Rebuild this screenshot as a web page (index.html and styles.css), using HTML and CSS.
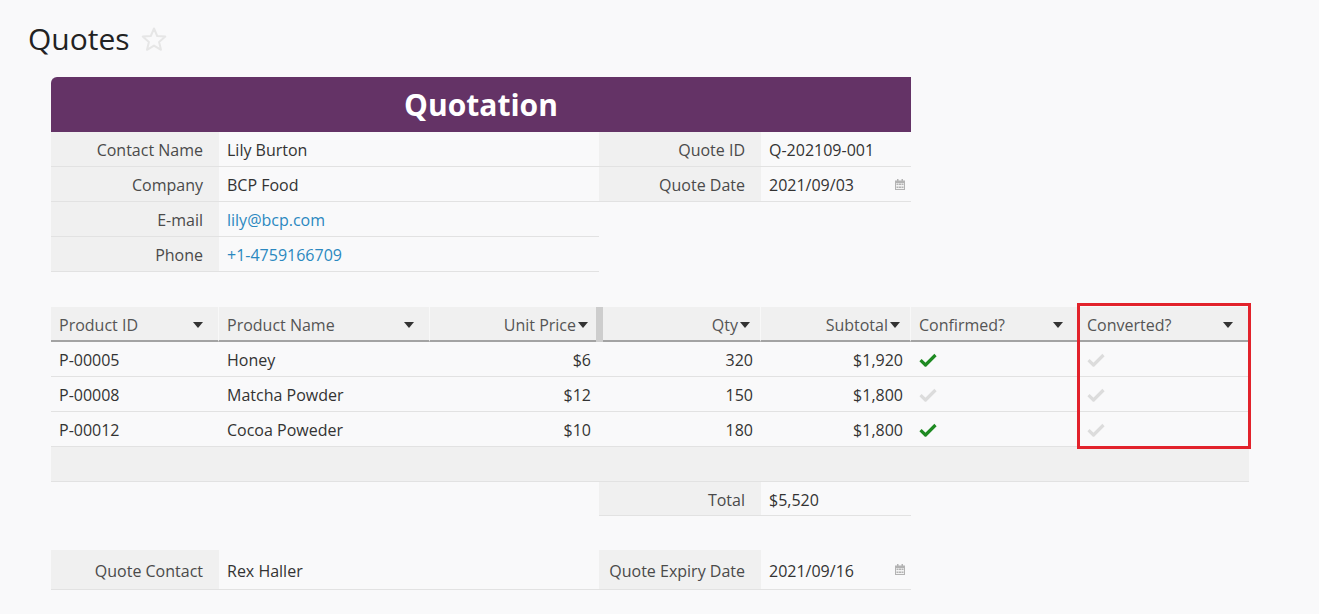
FILE: index.html
```html
<!DOCTYPE html>
<html lang="en">
<head>
  <meta charset="UTF-8" />
  <meta name="viewport" content="width=device-width, initial-scale=1.0"/>
  <title>Quotes</title>
  <link rel="stylesheet" href="styles.css">
</head>
<body>

  <div class="page-title">
    <h1>Quotes</h1>
    <svg class="star" width="28" height="27" viewBox="0 0 28 27">
      <path d="M14 2.5 L17.2 10 L25.3 10.6 L19.1 15.9 L21 23.8 L14 19.6 L7 23.8 L8.9 15.9 L2.7 10.6 L10.8 10 Z" fill="none" stroke="#e6e6e6" stroke-width="2" stroke-linejoin="round"/>
    </svg>
  </div>

  <div class="sheet">

    <div class="banner">Quotation</div>

    <div class="info-grid">
      <div class="cell label">Contact Name</div>
      <div class="cell value span-2">Lily Burton</div>
      <div class="cell label">Quote ID</div>
      <div class="cell value">Q-202109-001</div>

      <div class="cell label">Company</div>
      <div class="cell value span-2">BCP Food</div>
      <div class="cell label">Quote Date</div>
      <div class="cell value date">
        <span>2021/09/03</span>
        <svg class="calendar" width="10" height="11" viewBox="0 0 10 11">
          <rect x="0" y="1.5" width="10" height="9.5" fill="#b3b3b3"/>
          <rect x="2" y="0" width="1.5" height="2.5" fill="#b3b3b3"/>
          <rect x="6.5" y="0" width="1.5" height="2.5" fill="#b3b3b3"/>
          <rect x="1" y="4" width="8" height="6" fill="#f3f3f3"/>
          <rect x="1.5" y="4.5" width="2" height="1.5" fill="#b3b3b3"/>
          <rect x="4" y="4.5" width="2" height="1.5" fill="#b3b3b3"/>
          <rect x="6.5" y="4.5" width="2" height="1.5" fill="#b3b3b3"/>
          <rect x="1.5" y="7.5" width="2" height="1.5" fill="#b3b3b3"/>
          <rect x="4" y="7.5" width="2" height="1.5" fill="#b3b3b3"/>
          <rect x="6.5" y="7.5" width="2" height="1.5" fill="#b3b3b3"/>
        </svg>
      </div>

      <div class="cell label">E-mail</div>
      <div class="cell value span-2 link">lily@bcp.com</div>
      <div class="empty span-2"></div>

      <div class="cell label">Phone</div>
      <div class="cell value span-2 link">+1-4759166709</div>
      <div class="empty span-2"></div>
    </div>

    <div class="product-grid">
      <div class="cell head">Product ID <i class="caret"></i></div>
      <div class="cell head">Product Name <i class="caret"></i></div>
      <div class="cell head num frozen">Unit Price<i class="caret"></i></div>
      <div class="cell head num">Qty<i class="caret"></i></div>
      <div class="cell head num">Subtotal<i class="caret"></i></div>
      <div class="cell head">Confirmed? <i class="caret"></i></div>
      <div class="cell head">Converted? <i class="caret"></i></div>

      <div class="cell">P-00005</div>
      <div class="cell">Honey</div>
      <div class="cell num">$6</div>
      <div class="cell num">320</div>
      <div class="cell num">$1,920</div>
      <div class="cell"><svg class="check on" width="18" height="14" viewBox="0 0 18 14"><path d="M1.5 7.2 L6.5 12 L16.5 2" fill="none" stroke-width="3.2" stroke-linejoin="round"/></svg></div>
      <div class="cell"><svg class="check" width="18" height="14" viewBox="0 0 18 14"><path d="M1.5 7.2 L6.5 12 L16.5 2" fill="none" stroke-width="3.2" stroke-linejoin="round"/></svg></div>

      <div class="cell">P-00008</div>
      <div class="cell">Matcha Powder</div>
      <div class="cell num">$12</div>
      <div class="cell num">150</div>
      <div class="cell num">$1,800</div>
      <div class="cell"><svg class="check" width="18" height="14" viewBox="0 0 18 14"><path d="M1.5 7.2 L6.5 12 L16.5 2" fill="none" stroke-width="3.2" stroke-linejoin="round"/></svg></div>
      <div class="cell"><svg class="check" width="18" height="14" viewBox="0 0 18 14"><path d="M1.5 7.2 L6.5 12 L16.5 2" fill="none" stroke-width="3.2" stroke-linejoin="round"/></svg></div>

      <div class="cell">P-00012</div>
      <div class="cell">Cocoa Poweder</div>
      <div class="cell num">$10</div>
      <div class="cell num">180</div>
      <div class="cell num">$1,800</div>
      <div class="cell"><svg class="check on" width="18" height="14" viewBox="0 0 18 14"><path d="M1.5 7.2 L6.5 12 L16.5 2" fill="none" stroke-width="3.2" stroke-linejoin="round"/></svg></div>
      <div class="cell"><svg class="check" width="18" height="14" viewBox="0 0 18 14"><path d="M1.5 7.2 L6.5 12 L16.5 2" fill="none" stroke-width="3.2" stroke-linejoin="round"/></svg></div>

      <div class="cell new-row"></div>

      <div class="cell label total-label">Total</div>
      <div class="cell value">$5,520</div>

      <!-- annotation around the Converted? column -->
      <div class="highlight"></div>
    </div>

    <div class="footer-grid">
      <div class="cell label">Quote Contact</div>
      <div class="cell value span-2">Rex Haller</div>
      <div class="cell label">Quote Expiry Date</div>
      <div class="cell value date">
        <span>2021/09/16</span>
        <svg class="calendar" width="10" height="11" viewBox="0 0 10 11">
          <rect x="0" y="1.5" width="10" height="9.5" fill="#b3b3b3"/>
          <rect x="2" y="0" width="1.5" height="2.5" fill="#b3b3b3"/>
          <rect x="6.5" y="0" width="1.5" height="2.5" fill="#b3b3b3"/>
          <rect x="1" y="4" width="8" height="6" fill="#f3f3f3"/>
          <rect x="1.5" y="4.5" width="2" height="1.5" fill="#b3b3b3"/>
          <rect x="4" y="4.5" width="2" height="1.5" fill="#b3b3b3"/>
          <rect x="6.5" y="4.5" width="2" height="1.5" fill="#b3b3b3"/>
          <rect x="1.5" y="7.5" width="2" height="1.5" fill="#b3b3b3"/>
          <rect x="4" y="7.5" width="2" height="1.5" fill="#b3b3b3"/>
          <rect x="6.5" y="7.5" width="2" height="1.5" fill="#b3b3b3"/>
        </svg>
      </div>
    </div>

  </div>

</body>
</html>
```

FILE: styles.css
```css
* {
  box-sizing: border-box;
}

html, body {
  margin: 0;
  padding: 0;
  background-color: #f9f9fa;
  font-family: 'Open Sans', 'Liberation Sans', sans-serif;
  color: #333;
  overflow: hidden;
}

.page-title {
  display: flex;
  align-items: flex-start;
  gap: 10px;
  padding: 19px 0 0 28px;
  height: 77px;
}

.page-title h1 {
  margin: 0;
  font-size: 30px;
  font-weight: 400;
  line-height: 40px;
  color: #222;
}

.star {
  margin-top: 7px;
}

.sheet {
  margin-left: 51px;
  width: 1198px;
}

.banner {
  width: 860px;
  height: 55px;
  background-color: #643366;
  border-top-left-radius: 6px;
  color: #fff;
  font-size: 30px;
  font-weight: 700;
  text-align: center;
  line-height: 56px;
}

.info-grid,
.footer-grid {
  display: grid;
  grid-template-columns: 168px 211px 169px 162px 150px;
}

.product-grid {
  position: relative;
  display: grid;
  grid-template-columns: 168px 211px 169px 162px 150px 168px 170px;
  margin-top: 35px;
}

.footer-grid {
  margin-top: 34px;
}

.cell {
  height: 35px;
  padding: 2px 8px 0;
  display: flex;
  align-items: center;
  font-size: 16px;
  border-bottom: 1px solid #e2e2e2;
  white-space: nowrap;
}

.footer-grid .cell {
  height: 40px;
}

.span-2 {
  grid-column: span 2;
}

.empty {
  height: 35px;
}

.label {
  justify-content: flex-end;
  padding-right: 16px;
  background-color: #f0f0f0;
  color: #4a4a4a;
}

.link {
  color: #2b88c0;
}

.date {
  justify-content: space-between;
  padding-right: 6px;
}

.calendar {
  margin-top: -2px;
}

.head {
  position: relative;
  justify-content: space-between;
  padding-right: 15px;
  background-color: #f0f0f0;
  color: #555;
  border-bottom: 2px solid #a3a3a3;
  border-right: 1px solid #f8f8f8;
}

.num {
  justify-content: flex-end;
}

.head.num {
  gap: 2px;
  padding-right: 10px;
}

.frozen::after {
  content: '';
  position: absolute;
  z-index: 1;
  top: 0;
  bottom: -2px;
  right: -5px;
  width: 7px;
  background-color: #cdcdcd;
}

.caret {
  display: inline-block;
  width: 0;
  height: 0;
  border-left: 5px solid transparent;
  border-right: 5px solid transparent;
  border-top: 6px solid #333;
}

.check {
  stroke: #dcdcdc;
}

.check.on {
  stroke: #1e8a22;
}

.new-row {
  grid-column: 1 / -1;
  background-color: #f0f0f0;
}

.total-label {
  grid-column-start: 4;
  height: 34px;
}

.total-label + .value {
  height: 34px;
}

.highlight {
  position: absolute;
  left: 1026px;
  top: -4px;
  width: 174px;
  height: 146px;
  border: 3px solid #e2222b;
  pointer-events: none;
}
```
